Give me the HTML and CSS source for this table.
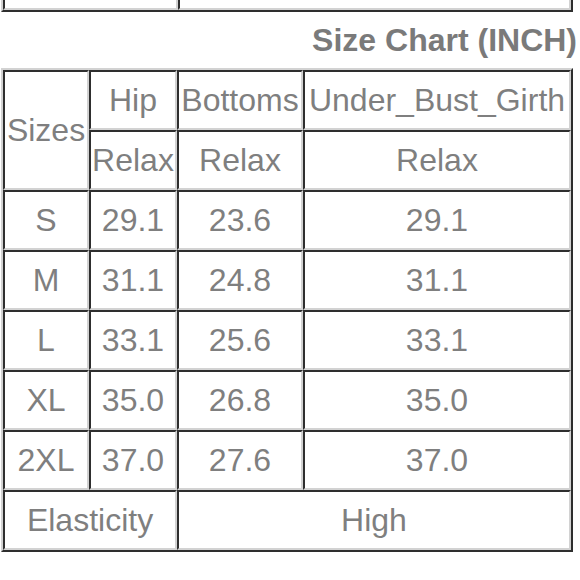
FILE: index.html
```html
<!DOCTYPE html>
<html>
<head>
<meta charset="utf-8">
<link rel="stylesheet" href="styles.css">
</head>
<body>
<div class="page">
  <table class="chart prev">
    <colgroup><col class="c-a"><col class="c-b"></colgroup>
    <tr><td></td><td></td></tr>
  </table>
  <h2 class="title">Size Chart (INCH)</h2>
  <table class="chart">
    <colgroup>
      <col class="c1"><col class="c2"><col class="c3"><col class="c4">
    </colgroup>
    <tr><td rowspan="2" class="tall">Sizes</td><td>Hip</td><td>Bottoms</td><td>Under_Bust_Girth</td></tr>
    <tr><td>Relax</td><td>Relax</td><td>Relax</td></tr>
    <tr><td>S</td><td>29.1</td><td>23.6</td><td>29.1</td></tr>
    <tr><td>M</td><td>31.1</td><td>24.8</td><td>31.1</td></tr>
    <tr><td>L</td><td>33.1</td><td>25.6</td><td>33.1</td></tr>
    <tr><td>XL</td><td>35.0</td><td>26.8</td><td>35.0</td></tr>
    <tr><td>2XL</td><td>37.0</td><td>27.6</td><td>37.0</td></tr>
    <tr><td colspan="2">Elasticity</td><td colspan="2">High</td></tr>
  </table>
</div>
</body>
</html>
```

FILE: styles.css
```css
html, body {
  margin: 0;
  padding: 0;
  background: #ffffff;
}

.page {
  width: 580px;
  font-family: "Liberation Sans", Arial, sans-serif;
  color: #7f7f7f;
}

.chart {
  margin-left: 1px;
  width: 572px;
  table-layout: fixed;
  border-collapse: separate;
  border-spacing: 0;
  border-style: solid;
  border-width: 2px;
  border-color: #d2d2d2 #2e2e2e #2e2e2e #d2d2d2;
}

.chart td {
  box-sizing: border-box;
  height: 60px;
  padding: 0;
  text-align: center;
  vertical-align: middle;
  font-size: 32px;
  line-height: 37px;
  white-space: nowrap;
  border-style: solid;
  border-width: 2px;
  border-color: #2e2e2e #d2d2d2 #d2d2d2 #2e2e2e;
}

.chart td.tall {
  height: 120px;
}

.prev {
  margin-top: -50px;
}

.prev td {
  height: 58px;
}

.c-a { width: 175px; }
.c-b { width: 393px; }

.c1 { width: 86px; }
.c2 { width: 88px; }
.c3 { width: 126px; }
.c4 { width: 268px; }

.title {
  margin: 10px 3px 9px 0;
  text-align: right;
  font-size: 32px;
  line-height: 37px;
  font-weight: bold;
  color: #7a7a7a;
}
```
